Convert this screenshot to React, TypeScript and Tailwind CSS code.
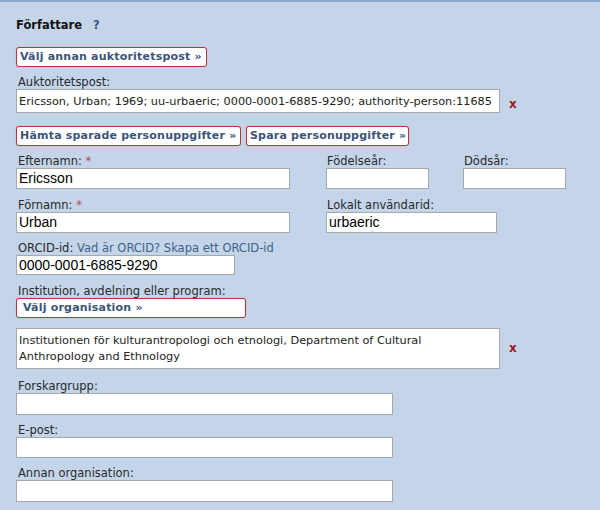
import React from "react";

const ui = "font-['DejaVu_Sans',Verdana,sans-serif]";

function Label({ children, className = "" }: { children: React.ReactNode; className?: string }) {
  return (
    <div className={`h-[13px] whitespace-nowrap text-[11.5px] leading-[13px] text-[#2a2a2a] ${className}`}>
      {children}
    </div>
  );
}

function TextBox({ value = "", w, h, big = true }: { value?: string; w: number; h: number; big?: boolean }) {
  return (
    <input
      readOnly
      value={value}
      style={{ width: w, height: h }}
      className={`block shrink-0 border border-[#a4a9b0] bg-white px-[2px] outline-none ${
        big ? "font-['Liberation_Sans',Arial,sans-serif] text-[14px] text-black" : "text-[11.3px] text-[#222]"
      }`}
    />
  );
}

function RedButton({ children, w, pl = 3 }: { children: React.ReactNode; w: number; pl?: number }) {
  return (
    <button
      type="button"
      style={{ width: w, paddingLeft: pl }}
      className="flex h-[20px] shrink-0 items-center rounded-[3px] border border-[#b8353b] bg-white text-[11px] font-bold tracking-[0.2px] text-[#3c5479] shadow-[0_0_1px_rgba(184,53,59,0.5)]"
    >
      {children}
    </button>
  );
}

function RemoveMark({ top }: { top: number }) {
  return (
    <span
      style={{ marginTop: top }}
      className="ml-[9px] block h-[12px] text-[12px] font-bold leading-[12px] text-[#a3161a]"
    >
      x
    </span>
  );
}

export default function App() {
  return (
    <div className={`${ui} h-[510px] w-[600px] overflow-hidden border-t-2 border-[#8ea9ce] bg-[#c4d5ea]`}>
      <div className="flex flex-col pl-[16px] pt-[16px]">
        {/* Heading */}
        <div className="flex h-[14px] items-center text-[11.5px] font-bold leading-[14px] text-[#111]">
          <span>Författare</span>
          <span className="ml-[11px] text-[#3c5479]">?</span>
        </div>

        <div className="mt-[15px] flex">
          <RedButton w={191}>Välj annan auktoritetspost »</RedButton>
        </div>

        <Label className="mt-[9px] pl-[2px]">Auktoritetspost:</Label>
        <div className="flex items-start">
          <TextBox
            w={484}
            h={24}
            big={false}
            value="Ericsson, Urban; 1969; uu-urbaeric; 0000-0001-6885-9290; authority-person:11685"
          />
          <RemoveMark top={9} />
        </div>

        <div className="mt-[13px] flex gap-[5px]">
          <RedButton w={225}>Hämta sparade personuppgifter »</RedButton>
          <RedButton w={163}>Spara personuppgifter »</RedButton>
        </div>

        {/* Name and years */}
        <div className="mt-[9px] flex">
          <div className="w-[310px]">
            <Label className="pl-[2px]">
              Efternamn: <span className="text-[#c04a50]">*</span>
            </Label>
            <TextBox w={274} h={21} value="Ericsson" />
          </div>
          <div className="w-[137px]">
            <Label className="pl-[1px]">Födelseår:</Label>
            <TextBox w={103} h={21} />
          </div>
          <div>
            <Label className="pl-[1px]">Dödsår:</Label>
            <TextBox w={103} h={21} />
          </div>
        </div>

        <div className="mt-[10px] flex">
          <div className="w-[310px]">
            <Label className="pl-[2px]">
              Förnamn: <span className="text-[#c04a50]">*</span>
            </Label>
            <TextBox w={274} h={21} value="Urban" />
          </div>
          <div>
            <Label className="pl-[1px]">Lokalt användarid:</Label>
            <TextBox w={171} h={21} value="urbaeric" />
          </div>
        </div>

        <Label className="mt-[9px] pl-[2px]">
          ORCID-id: <span className="text-[#3f6386]">Vad är ORCID? Skapa ett ORCID-id</span>
        </Label>
        <TextBox w={219} h={20} value="0000-0001-6885-9290" />

        <Label className="mt-[10px] pl-[2px]">Institution, avdelning eller program:</Label>
        <div className="flex">
          <RedButton w={230} pl={6}>
            Välj organisation »
          </RedButton>
        </div>

        <div className="mt-[10px] flex items-start">
          <div className="h-[41px] w-[484px] border border-[#a4a9b0] bg-white px-[2px] pt-[4px] text-[11.3px] leading-[16px] text-[#222]">
            Institutionen för kulturantropologi och etnologi, Department of Cultural
            <br />
            Anthropology and Ethnology
          </div>
          <RemoveMark top={14} />
        </div>

        <Label className="mt-[11px] pl-[2px]">Forskargrupp:</Label>
        <TextBox w={377} h={22} />

        <Label className="mt-[9px] pl-[2px]">E-post:</Label>
        <TextBox w={377} h={21} />

        <Label className="mt-[9px] pl-[2px]">Annan organisation:</Label>
        <TextBox w={377} h={22} />
      </div>
    </div>
  );
}
